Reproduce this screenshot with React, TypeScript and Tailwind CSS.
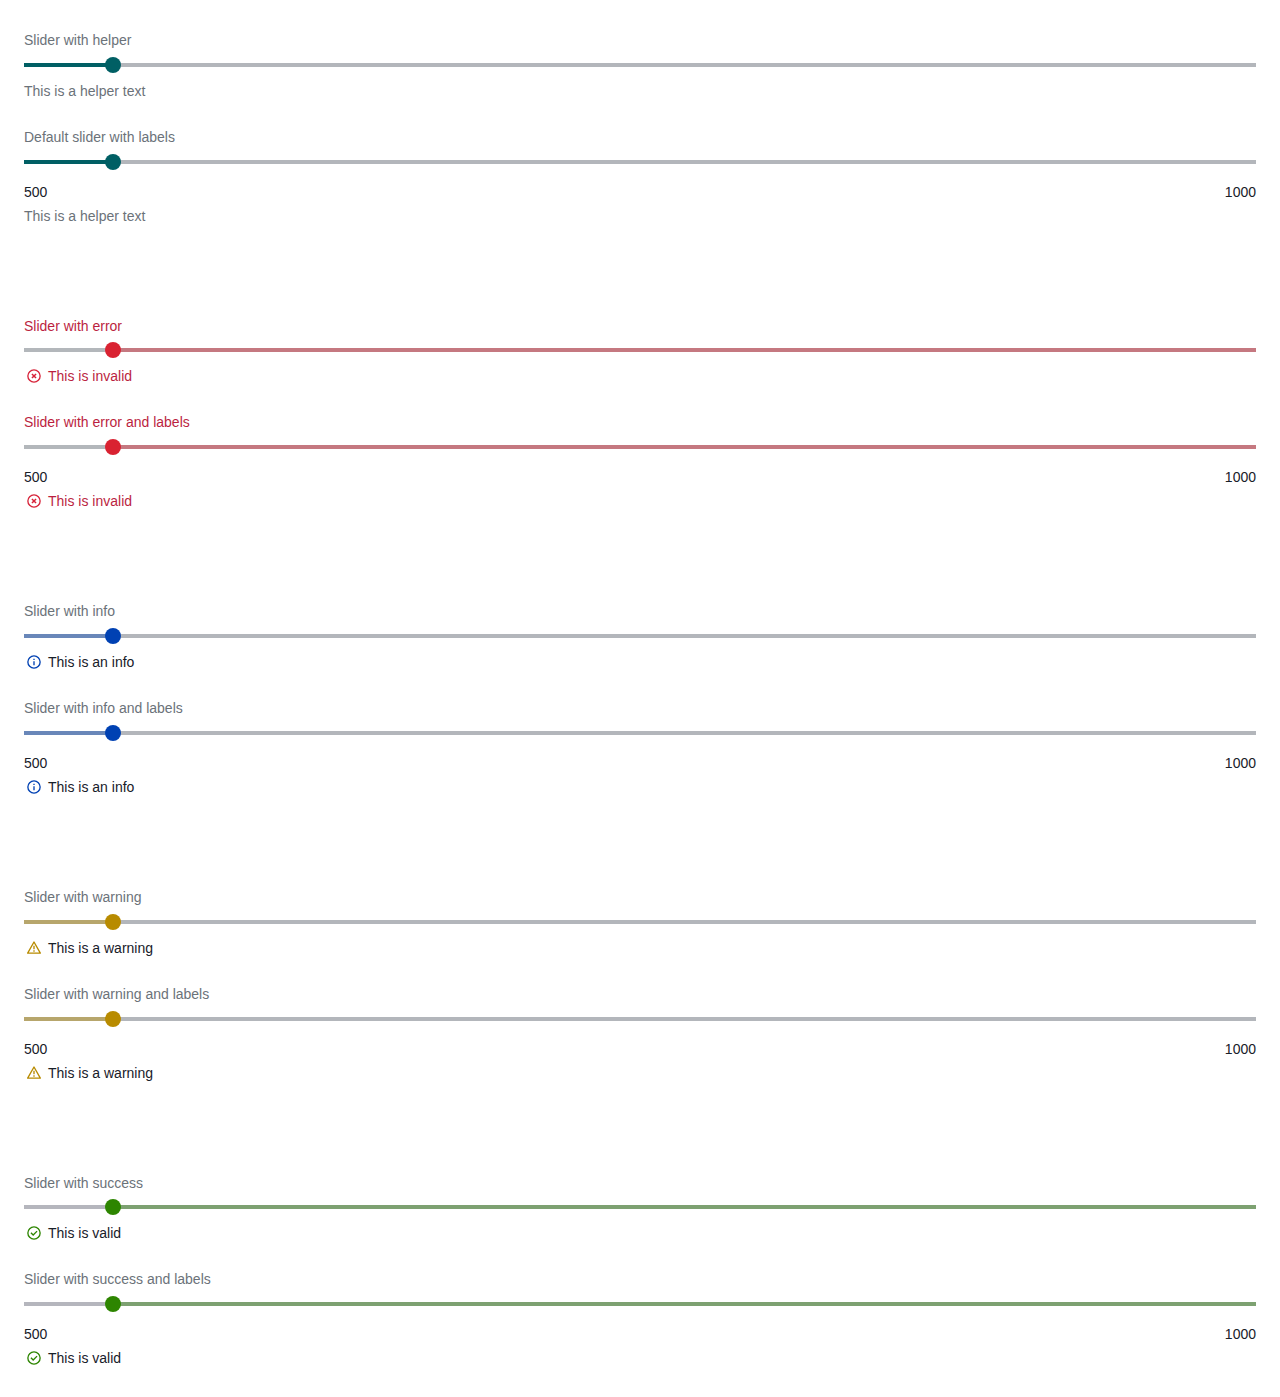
import React from 'react';

type Kind = 'default' | 'error' | 'info' | 'warning' | 'success';

interface Style {
  label: string;
  message: string;
  icon: string;
  left: string;
  right: string;
  thumb: string;
}

const styles: Record<Kind, Style> = {
  default: { label: 'text-[#6b7279]', message: 'text-[#6b7279]', icon: '', left: 'bg-[#005f64]', right: 'bg-[#b3b6bb]', thumb: 'bg-[#005f64]' },
  error: { label: 'text-[#bb1f3f]', message: 'text-[#bb1f3f]', icon: 'text-[#d72339]', left: 'bg-[#b3b7bb]', right: 'bg-[#c57880]', thumb: 'bg-[#d92231]' },
  info: { label: 'text-[#6b7279]', message: 'text-[#182029]', icon: 'text-[#0041b3]', left: 'bg-[#6987b9]', right: 'bg-[#b3b6bb]', thumb: 'bg-[#0041b3]' },
  warning: { label: 'text-[#6b7279]', message: 'text-[#182029]', icon: 'text-[#b88b00]', left: 'bg-[#b7a66c]', right: 'bg-[#b3b6bb]', thumb: 'bg-[#b88b00]' },
  success: { label: 'text-[#6b7279]', message: 'text-[#182029]', icon: 'text-[#2d8500]', left: 'bg-[#b5b6bd]', right: 'bg-[#7da171]', thumb: 'bg-[#2d8500]' },
};

function StatusIcon({ kind, className }: { kind: Kind; className: string }) {
  return (
    <svg viewBox="0 0 24 24" className={`size-4 shrink-0 ${className}`} fill="none" stroke="currentColor" strokeWidth="2">
      {kind !== 'warning' && <circle cx="12" cy="12" r="9.2" />}
      {kind === 'error' && <path d="M8.9 8.9l6.2 6.2M15.1 8.9l-6.2 6.2" strokeWidth="2.2" />}
      {kind === 'info' && <path d="M12 7v2M12 11v6" />}
      {kind === 'warning' && (
        <>
          <path d="M12 3L21.5 19.8H2.5z" strokeLinejoin="round" />
          <path d="M12 8.5v5.5M12 15.5v2" />
        </>
      )}
      {kind === 'success' && <path d="M7.4 11.6l3.4 3.4 5.8-5.8" />}
    </svg>
  );
}

interface SliderProps {
  kind: Kind;
  label: string;
  message: string;
  labels?: boolean;
}

function Slider({ kind, label, message, labels = false }: SliderProps) {
  const s = styles[kind];
  return (
    <div className="flex flex-col">
      <div className={`h-[19.8px] ${s.label}`}>{label}</div>
      <div className="mt-[7px] flex h-4 items-center">
        <div className={`h-1 w-[82px] ${s.left}`} />
        <div className={`relative z-10 -mx-px size-4 rounded-full ${s.thumb}`} />
        <div className={`h-1 flex-1 ${s.right}`} />
      </div>
      {labels && (
        <div className="mt-3 flex h-5 justify-between text-[#182029]">
          <span>500</span>
          <span>1000</span>
        </div>
      )}
      <div className={`flex h-5 items-center ${labels ? 'mt-1' : 'mt-2'} ${s.message}`}>
        {kind !== 'default' && (
          <span className="mr-1.5 ml-0.5 flex">
            <StatusIcon kind={kind} className={s.icon} />
          </span>
        )}
        <span>{message}</span>
      </div>
    </div>
  );
}

const groups: { kind: Kind; first: string; second: string; message: string }[] = [
  { kind: 'default', first: 'Slider with helper', second: 'Default slider with labels', message: 'This is a helper text' },
  { kind: 'error', first: 'Slider with error', second: 'Slider with error and labels', message: 'This is invalid' },
  { kind: 'info', first: 'Slider with info', second: 'Slider with info and labels', message: 'This is an info' },
  { kind: 'warning', first: 'Slider with warning', second: 'Slider with warning and labels', message: 'This is a warning' },
  { kind: 'success', first: 'Slider with success', second: 'Slider with success and labels', message: 'This is valid' },
];

export default function App() {
  return (
    <main className="h-[1397px] overflow-hidden bg-white px-6 pt-[30.05px] font-['Liberation_Sans',Arial,sans-serif] text-sm leading-5">
      {groups.map((g) => (
        <section key={g.kind} className="flex h-[285.65px] flex-col gap-[26px]">
          <Slider kind={g.kind} label={g.first} message={g.message} />
          <Slider kind={g.kind} label={g.second} message={g.message} labels />
        </section>
      ))}
    </main>
  );
}
